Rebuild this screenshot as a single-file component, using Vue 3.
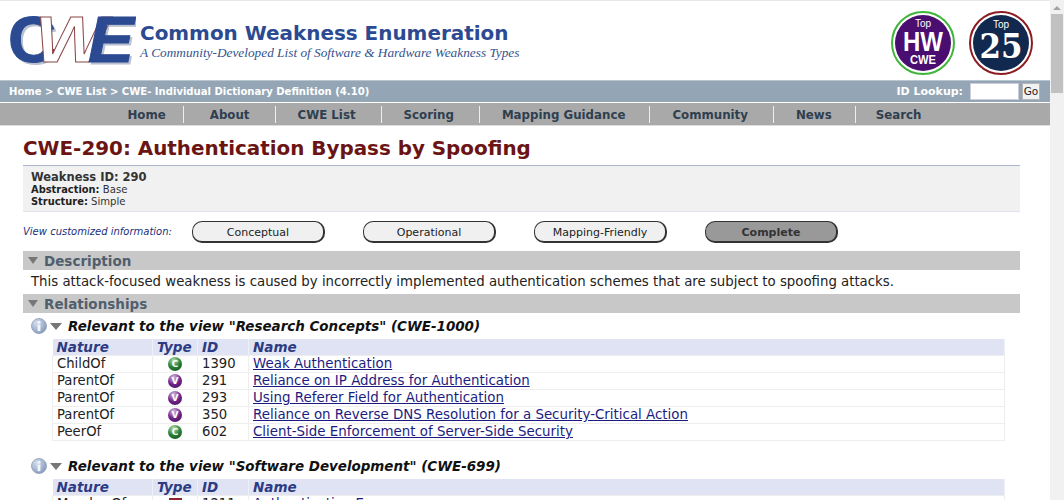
<script setup>
const navItems = ['Home', 'About', 'CWE List', 'Scoring', 'Mapping Guidance', 'Community', 'News', 'Search']
const views = [
  { label: 'Conceptual', active: false },
  { label: 'Operational', active: false },
  { label: 'Mapping-Friendly', active: false },
  { label: 'Complete', active: true },
]
const research = [
  { nature: 'ChildOf', type: 'C', id: '1390', name: 'Weak Authentication' },
  { nature: 'ParentOf', type: 'V', id: '291', name: 'Reliance on IP Address for Authentication' },
  { nature: 'ParentOf', type: 'V', id: '293', name: 'Using Referer Field for Authentication' },
  { nature: 'ParentOf', type: 'V', id: '350', name: 'Reliance on Reverse DNS Resolution for a Security-Critical Action' },
  { nature: 'PeerOf', type: 'C', id: '602', name: 'Client-Side Enforcement of Server-Side Security' },
]
const software = [
  { nature: 'MemberOf', type: 'R', id: '1211', name: 'Authentication Errors' },
]
const tables = [
  { title: 'Relevant to the view "Research Concepts" (CWE-1000)', rows: research },
  { title: 'Relevant to the view "Software Development" (CWE-699)', rows: software },
]
const badgeColor = { C: 'green', V: 'purple', R: 'red' }
</script>

<template>
  <div class="viewport">
    <div class="page">
      <header class="masthead">
        <div class="brand">
          <svg class="logo" width="128" height="50" viewBox="0 0 128 50">
            <g class="logo-shadow" transform="translate(2 2)">
              <text class="logo-c" x="0" y="46" textLength="48" lengthAdjust="spacingAndGlyphs">C</text>
              <text class="logo-e" x="80" y="46" textLength="46" lengthAdjust="spacingAndGlyphs">E</text>
            </g>
            <text class="logo-c" x="0" y="46" textLength="48" lengthAdjust="spacingAndGlyphs">C</text>
            <text class="logo-w" x="27" y="46" textLength="72" lengthAdjust="spacingAndGlyphs">W</text>
            <text class="logo-e" x="80" y="46" textLength="46" lengthAdjust="spacingAndGlyphs">E</text>
          </svg>
          <div class="brand-text">
            <div class="brand-title">Common Weakness Enumeration</div>
            <div class="brand-sub">A Community-Developed List of Software &amp; Hardware Weakness Types</div>
          </div>
        </div>
        <div class="badges">
          <svg class="badge" width="64" height="64" viewBox="0 0 64 64">
            <circle cx="32" cy="32" r="31" fill="#fff" stroke="#3fb53a" stroke-width="2" />
            <circle cx="32" cy="32" r="28" fill="#4a0e70" />
            <text class="b-top" x="32" y="16" text-anchor="middle">Top</text>
            <text class="b-hw" x="32" y="40" text-anchor="middle" textLength="40" lengthAdjust="spacingAndGlyphs">HW</text>
            <text class="b-cwe" x="32" y="53" text-anchor="middle" textLength="26" lengthAdjust="spacingAndGlyphs">CWE</text>
          </svg>
          <svg class="badge" width="64" height="64" viewBox="0 0 64 64">
            <circle cx="32" cy="32" r="31" fill="#fff" stroke="#8c1c22" stroke-width="2" />
            <circle cx="32" cy="32" r="28" fill="#12294f" />
            <text class="b-top" x="32" y="17" text-anchor="middle">Top</text>
            <text class="b-25" x="32" y="47" text-anchor="middle" textLength="43" lengthAdjust="spacingAndGlyphs">25</text>
          </svg>
        </div>
      </header>

      <div class="crumbs">
        <div class="crumb-text">Home &gt; CWE List &gt; CWE- Individual Dictionary Definition (4.10)</div>
        <div class="lookup">
          <span>ID Lookup:</span>
          <span class="lookup-input"></span>
          <span class="lookup-go">Go</span>
        </div>
      </div>

      <nav class="nav">
        <span v-for="item in navItems" :key="item" class="nav-item">{{ item }}</span>
      </nav>

      <main class="content">
        <h1 class="title">CWE-290: Authentication Bypass by Spoofing</h1>
        <div class="info">
          <div class="info-id">Weakness ID: 290</div>
          <div><b>Abstraction:</b> Base</div>
          <div><b>Structure:</b> Simple</div>
        </div>

        <div class="views">
          <span class="views-label">View customized information:</span>
          <span
            v-for="v in views"
            :key="v.label"
            class="view-btn"
            :class="{ active: v.active }"
          >{{ v.label }}</span>
        </div>

        <div class="section-bar"><span class="tri"></span>Description</div>
        <p class="desc">This attack-focused weakness is caused by incorrectly implemented authentication schemes that are subject to spoofing attacks.</p>

        <div class="section-bar"><span class="tri"></span>Relationships</div>

        <section v-for="t in tables" :key="t.title" class="rel">
          <div class="rel-head">
            <svg class="info-icon" width="16" height="16" viewBox="0 0 17 17">
              <defs>
                <radialGradient id="ig" cx="0.35" cy="0.3" r="0.8">
                  <stop offset="0" stop-color="#d5dfee" />
                  <stop offset="1" stop-color="#7f95b8" />
                </radialGradient>
              </defs>
              <circle cx="8.5" cy="8.5" r="8" fill="url(#ig)" stroke="#8a9bb5" stroke-width="0.8" />
              <rect x="7" y="7" width="3" height="7" fill="#f2f5fa" />
              <circle cx="8.5" cy="4.6" r="1.6" fill="#f2f5fa" />
            </svg>
            <span class="tri tri-rel"></span>
            <span class="rel-title">{{ t.title }}</span>
          </div>
          <table class="rel-table">
            <colgroup>
              <col class="c1" /><col class="c2" /><col class="c3" /><col />
            </colgroup>
            <thead>
              <tr><th>Nature</th><th>Type</th><th>ID</th><th>Name</th></tr>
            </thead>
            <tbody>
              <tr v-for="r in t.rows" :key="r.id">
                <td class="nature">{{ r.nature }}</td>
                <td class="type-cell">
                  <span v-if="r.type === 'R'" class="type-square">C</span>
                  <span v-else class="type-ball" :class="badgeColor[r.type]">{{ r.type }}</span>
                </td>
                <td>{{ r.id }}</td>
                <td><a class="link" href="#">{{ r.name }}</a></td>
              </tr>
            </tbody>
          </table>
        </section>
      </main>
    </div>
    <aside class="scrollbar">
      <span class="arrow"></span>
      <span class="thumb"></span>
    </aside>
  </div>
</template>

<style>
html, body { margin: 0; overflow: hidden; }
</style>

<style scoped>
.viewport {
  display: flex;
  width: 1064px;
  height: 500px;
  overflow: hidden;
  background: #fff;
  font-family: "DejaVu Sans", Verdana, sans-serif;
  color: #222;
}
.page { width: 1050px; flex: none; border-top: 1px solid #e6e6e6; box-sizing: border-box; }
.masthead {
  height: 79px;
  display: flex;
  justify-content: space-between;
  box-sizing: border-box;
  padding: 10px 17px 0 8px;
}
.brand { display: flex; gap: 4px; align-items: flex-start; }
.logo { margin-top: 5px; flex: none; }
.logo-c, .logo-e, .logo-w { font-family: "Liberation Sans", sans-serif; font-size: 65px; font-weight: 700; }
.logo-c { fill: #2b4a91; stroke: #2b4a91; stroke-width: 1; }
.logo-e { font-style: italic; fill: #2b4a91; stroke: #2b4a91; stroke-width: 1; }
.logo-w { font-style: italic; fill: #fff; stroke: #8d4a4a; stroke-width: 0.9; }
.logo-shadow .logo-c, .logo-shadow .logo-e { fill: #b9c0cf; stroke: #b9c0cf; }
.brand-text { padding-top: 10px; }
.brand-title { font-size: 19.95px; line-height: 24px; font-weight: 700; color: #2b4a91; }
.brand-sub { font: italic 13.3px/18px "Liberation Serif", serif; color: #35538f; margin-top: -1px; }
.badges { display: flex; gap: 14px; }
.badge text { fill: #fff; font-family: "Liberation Sans", sans-serif; }
.b-top { font-size: 10px; }
.b-hw { font-size: 27px; font-weight: 700; }
.b-cwe { font-size: 13px; font-weight: 700; }
.badge .b-25 { font-family: "DejaVu Serif", serif; font-size: 34px; font-weight: 700; }
.crumbs {
  height: 21px;
  background: #94a6b6;
  border-top: 1px solid #b9c5cf;
  display: flex;
  justify-content: space-between;
  align-items: center;
  padding: 0 10px 0 9px;
  color: #fff;
  font-weight: 700;
}
.crumb-text { font-size: 10.05px; }
.lookup { display: flex; align-items: center; font-size: 11px; }
.lookup-input { width: 47px; height: 15px; background: #fff; margin-left: 7px; border: 1px solid #ccd; }
.lookup-go {
  width: 16px;
  height: 15px;
  margin-left: 3px;
  background: #f2f2f2;
  border: 1px solid #b5b5b5;
  color: #222;
  font-size: 10.5px;
  font-weight: 400;
  line-height: 15px;
  text-align: center;
}
.nav {
  margin-top: 1px;
  height: 22px;
  background: #a9a9a9;
  border-bottom: 1px solid #ddd;
  display: flex;
  align-items: center;
  padding-left: 105px;
}
.nav-item {
  padding: 2px 25px 0 22px;
  font-size: 11.8px;
  line-height: 15px;
  font-weight: 700;
  color: #2e3f50;
  border-right: 1px solid #eee;
}
.nav-item:first-child { padding-right: 17px; padding-left: 22.5px; }
.nav-item:nth-child(2) { padding-left: 26px; }
.nav-item:nth-child(5) { padding-right: 24px; }
.nav-item:nth-child(7) { padding-right: 23px; }
.nav-item:last-child { border-right: 0; padding-left: 20px; }
.content { padding: 0 30px 0 23px; }
.title {
  margin: 0;
  padding: 10px 0 3px;
  font-size: 19.9px;
  line-height: 26px;
  font-weight: 700;
  color: #6b1414;
  border-bottom: 1px solid #aab4cf;
}
.info {
  height: 46px;
  box-sizing: border-box;
  padding: 5px 8px 0;
  background: #f1f1f1;
  border-bottom: 1px solid #dfe3ee;
  font-size: 10.1px;
  line-height: 12px;
  color: #333;
}
.info b { color: #222; font-size: 9.9px; }
.info-id { font-size: 11.5px; font-weight: 700; line-height: 13px; }
.views { display: flex; align-items: center; height: 39px; }
.views-label { width: 169px; font-size: 10px; font-style: italic; color: #1c2f7a; }
.view-btn {
  width: 130px;
  height: 19px;
  margin-right: 38px;
  border: 1px solid #333;
  border-right-width: 2px;
  border-bottom-width: 2px;
  border-radius: 10px;
  background: #f0f0f0;
  font-size: 11px;
  line-height: 21px;
  text-align: center;
  color: #222;
}
.view-btn.active { background: #999; font-weight: 700; color: #333; }
.section-bar {
  height: 19px;
  background: #c8c8c8;
  display: flex;
  align-items: center;
  font-size: 13.5px;
  font-weight: 700;
  color: #505f6e;
}
.tri {
  width: 0;
  height: 0;
  margin: 0 6px 0 5px;
  border-left: 5px solid transparent;
  border-right: 5px solid transparent;
  border-top: 7px solid #777;
}
.desc { margin: 0; padding: 3px 8px 3px; font-size: 13.31px; line-height: 18px; color: #222; height: 18px; white-space: nowrap; }
.rel { padding: 0 16px 0 8px; height: 140px; }
.rel-head { display: flex; align-items: center; height: 26px; }
.info-icon { flex: none; margin-right: 3px; }
.tri-rel { margin: 0 6px 0 0; border-left-width: 6px; border-right-width: 6px; }
.rel-title { font-size: 13.45px; font-weight: 700; font-style: italic; color: #111; }
.rel-table {
  width: 953px;
  margin-left: 21px;
  border-collapse: collapse;
  table-layout: fixed;
  font-size: 13.2px;
}
.c1 { width: 100px; }
.c2 { width: 45px; }
.c3 { width: 51px; }
.rel-table th {
  background: #e0e3f4;
  color: #2c3b82;
  font-size: 13.5px;
  font-weight: 700;
  font-style: italic;
  text-align: left;
  height: 16px;
  padding: 0 4px;
  line-height: 16px;
  border-right: 1px solid #eef0f8;
}
.rel-table td {
  height: 16px;
  padding: 0 4px;
  line-height: 16px;
  border: 1px solid #eee;
  white-space: nowrap;
}
.type-cell { text-align: center; }
.type-ball {
  display: inline-block;
  width: 14px;
  height: 14px;
  border-radius: 50%;
  color: #fff;
  font-size: 9px;
  font-weight: 700;
  line-height: 14px;
  text-align: center;
  vertical-align: 1px;
}
.type-ball.green { background: radial-gradient(circle at 40% 25%, #b7dcae, #2a8035 50%, #124a1b); }
.type-ball.purple { background: radial-gradient(circle at 40% 25%, #d8bfe0, #70248a 50%, #3d0f50); }
.type-square {
  display: inline-block;
  width: 13px;
  height: 13px;
  background: #8c2530;
  color: #fff;
  font-size: 9px;
  font-weight: 700;
  line-height: 13px;
  text-align: center;
  vertical-align: 1px;
}
.link { color: #1c1c80; text-decoration: underline; font-size: 13.4px; }
.scrollbar {
  width: 14px;
  flex: none;
  background: #f1f1f1;
  display: flex;
  flex-direction: column;
  align-items: center;
}
.arrow {
  width: 0;
  height: 0;
  margin: 6px 0 4px;
  border-left: 4px solid transparent;
  border-right: 4px solid transparent;
  border-bottom: 4px solid #a3a3a3;
}
.thumb { width: 12px; height: 79px; background: #c1c1c1; }
</style>
